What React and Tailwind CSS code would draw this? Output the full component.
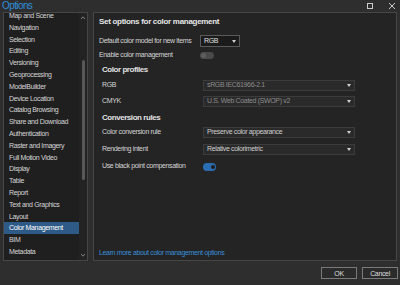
const items = [
  "Map and Scene", "Navigation", "Selection", "Editing", "Versioning",
  "Geoprocessing", "ModelBuilder", "Device Location", "Catalog Browsing",
  "Share and Download", "Authentication", "Raster and Imagery",
  "Full Motion Video", "Display", "Table", "Report", "Text and Graphics",
  "Layout", "Color Management", "BIM", "Metadata",
];

function Caret() {
  return (
    <svg width="4" height="3" viewBox="0 0 4 3" className="shrink-0">
      <path d="M0 0h4L2 3z" fill="#d0d0d0" />
    </svg>
  );
}

function Select({ value, disabled, className = "" }) {
  return (
    <div className={`h-[11px] flex items-center justify-between pl-[3px] pr-[3px] bg-[#2a2a2a] border border-[#3c3c3c] ${className}`}>
      <span className={disabled ? "text-[#8c8c8c]" : "text-[#cfcfcf]"}>{value}</span>
      <Caret />
    </div>
  );
}

function Row({ label, children, className = "" }) {
  return (
    <div className={`flex items-center ${className}`}>
      <span className="w-[101px] shrink-0">{label}</span>
      {children}
    </div>
  );
}

export default function App() {
  return (
    <div
      className="w-[400px] h-[285px] bg-[#2e2e2e] flex flex-col text-[7px] tracking-[-0.35px] text-[#d6d6d6] overflow-hidden"
      style={{ fontFamily: '"Liberation Sans", Arial, sans-serif' }}
    >
      <div className="h-[12px] flex items-center justify-between pl-[2px] pr-[5px]">
        <span className="text-[10px] tracking-[-0.6px] text-[#2f8fdc] leading-none">Options</span>
        <div className="flex items-center gap-[16px]">
          <div className="w-[6px] h-[6px] border border-[#cccccc]" />
          <svg width="6" height="6" viewBox="0 0 6 6">
            <path d="M0 0L6 6M6 0L0 6" stroke="#cccccc" strokeWidth="1" />
          </svg>
        </div>
      </div>

      <div className="h-[249px] flex px-[3px] gap-[5px]">
        <div className="w-[85px] border border-[#464646] bg-[#1f1f1f] flex overflow-hidden">
          <div className="flex-1 -mt-[3px]">
            {items.map(it => (
              <div
                key={it}
                className={`h-[11.8px] leading-[11.8px] pl-[5px] whitespace-nowrap ${it === "Color Management" ? "bg-[#2d5a86] text-white" : ""}`}
              >
                {it}
              </div>
            ))}
          </div>
          <div className="w-[8px] bg-[#232323] flex flex-col items-center py-[2px]">
            <svg width="4" height="3" viewBox="0 0 4 3" className="mt-[1px]">
              <path d="M0 3L2 0.8L4 3" stroke="#9a9a9a" strokeWidth="0.8" fill="none" />
            </svg>
            <div className="w-[3px] h-[120px] bg-[#585858] rounded-full mt-[41px]" />
            <svg width="4" height="3" viewBox="0 0 4 3" className="mt-auto mb-[1px]">
              <path d="M0 0L2 2.2L4 0" stroke="#9a9a9a" strokeWidth="0.8" fill="none" />
            </svg>
          </div>
        </div>

        <div className="flex-1 border border-[#464646] bg-[#242424] flex flex-col pl-[5px] pr-[4px] pt-[2px] pb-[4px]">
          <div className="h-[14px] flex items-center text-[8px] font-bold tracking-[-0.3px] text-[#e6e6e6]">
            Set options for color management
          </div>

          <Row label="Default color model for new items" className="mt-[6px] h-[12px]">
            <div className="w-[40px] h-[12px] flex items-center justify-between px-[3px] bg-[#1b1b1b] border border-[#5a5a5a]">
              <span className="text-[#e0e0e0]">RGB</span>
              <Caret />
            </div>
          </Row>

          <Row label="Enable color management" className="mt-[2px] h-[12px]">
            <div className="w-[14px] h-[7px] rounded-full bg-[#4a4a4a] flex items-center pl-[1px]">
              <div className="w-[5px] h-[5px] rounded-full bg-[#5e5e5e]" />
            </div>
          </Row>

          <div className="pl-[3px] flex flex-col">
            <div className="mt-[2px] h-[14px] flex items-center text-[8px] font-bold tracking-[-0.45px] text-[#e0e0e0]">
              Color profiles
            </div>
            <Row label="RGB" className="mt-[3px] h-[11px]">
              <Select value="sRGB IEC61966-2.1" disabled className="w-[152px]" />
            </Row>
            <Row label="CMYK" className="mt-[5px] h-[11px]">
              <Select value="U.S. Web Coated (SWOP) v2" disabled className="w-[152px]" />
            </Row>
            <div className="mt-[4px] h-[14px] flex items-center text-[8px] font-bold tracking-[-0.45px] text-[#e0e0e0]">
              Conversion rules
            </div>
            <Row label="Color conversion rule" className="mt-[2px] h-[11px]">
              <Select value="Preserve color appearance" className="w-[152px]" />
            </Row>
            <Row label="Rendering intent" className="mt-[6px] h-[11px]">
              <Select value="Relative colorimetric" className="w-[152px]" />
            </Row>
            <Row label="Use black point compensation" className="mt-[6px] h-[11px]">
              <div className="w-[13px] h-[8px] rounded-full bg-[#2a6db3] flex items-center justify-end pr-[1.5px]">
                <div className="w-[4px] h-[4px] rounded-full bg-[#1e1e1e]" />
              </div>
            </Row>
          </div>

          <div className="mt-auto text-[#3a8fd8] leading-none">
            Learn more about color management options
          </div>
        </div>
      </div>

      <div className="flex-1 flex items-center justify-end gap-[5px] pr-[2px]">
        <button className="w-[36px] h-[12px] border border-[#7a7a7a] bg-[#2b2b2b] text-[#dddddd] leading-none">
          OK
        </button>
        <button className="w-[36px] h-[12px] border border-[#7a7a7a] bg-[#2b2b2b] text-[#dddddd] leading-none">
          Cancel
        </button>
      </div>
    </div>
  );
}
